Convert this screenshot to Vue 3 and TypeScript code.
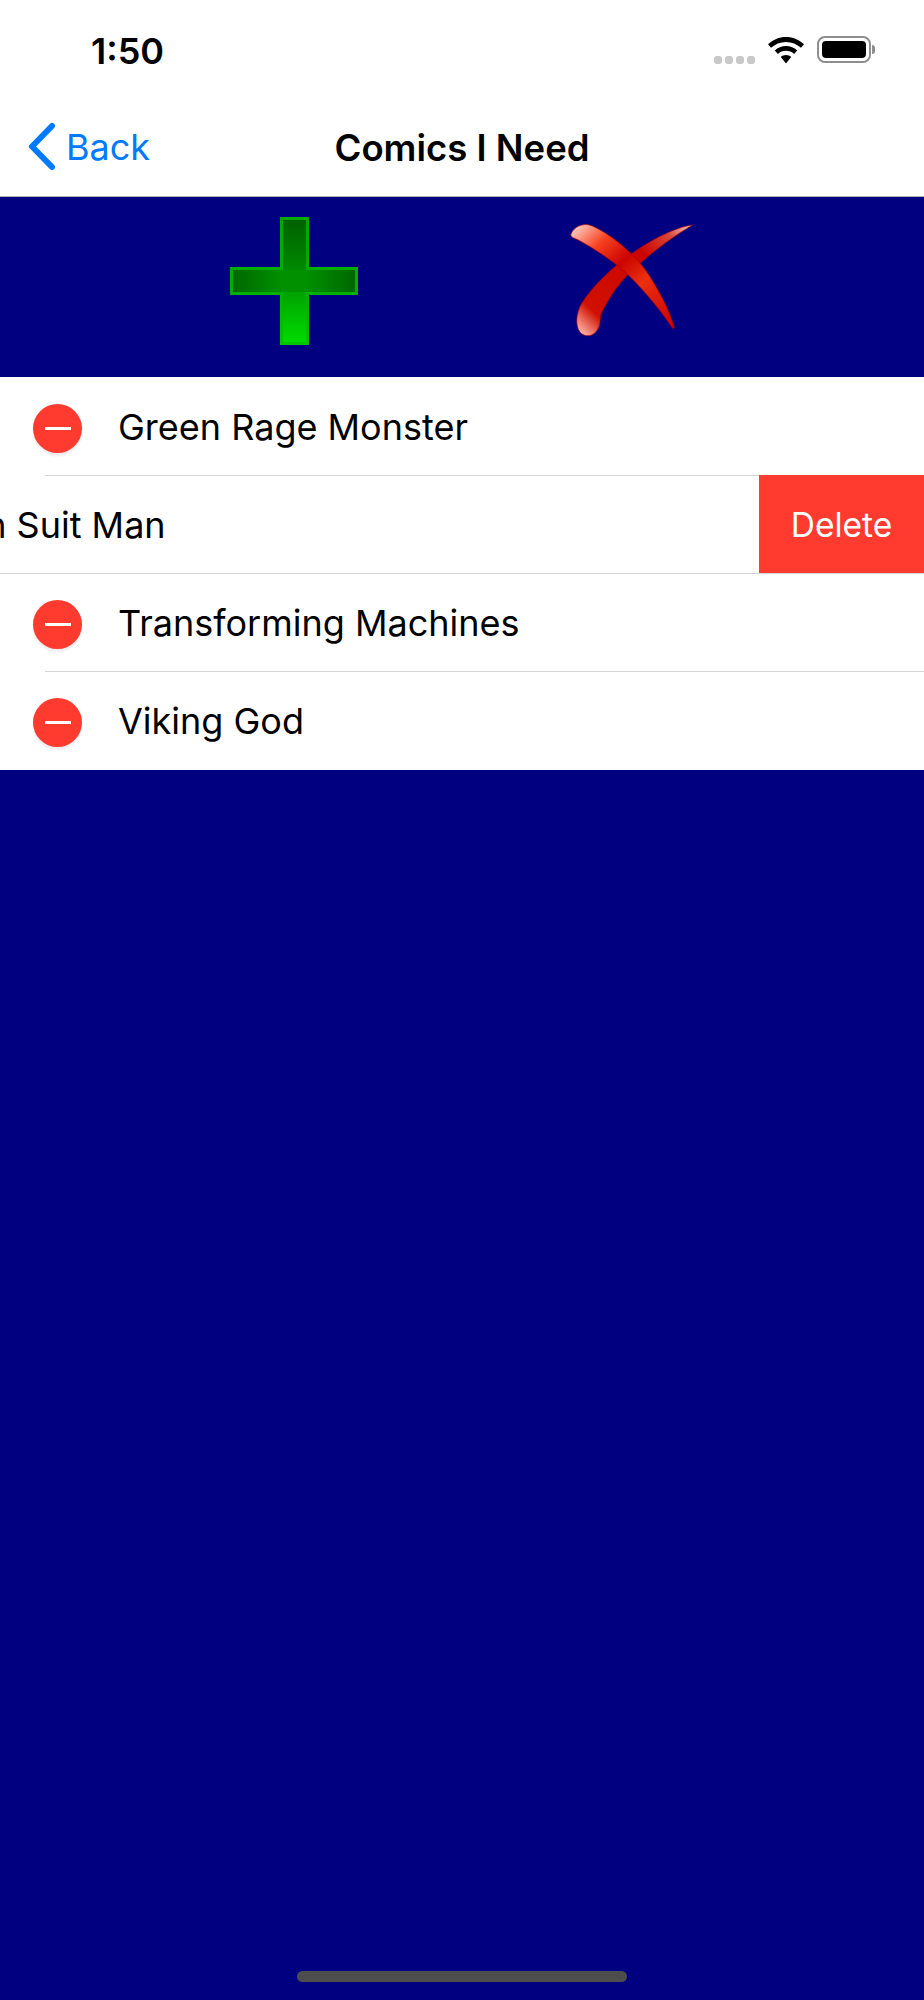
<script setup lang="ts">
interface Comic { name: string; swiped?: boolean }
const comics: Comic[] = [
  { name: 'Green Rage Monster' },
  { name: 'Iron Suit Man', swiped: true },
  { name: 'Transforming Machines' },
  { name: 'Viking God' },
]
</script>

<template>
  <div class="page">
    <header class="status">
      <span class="time">1:50</span>
      <div class="indicators">
        <div class="dots"><i></i><i></i><i></i><i></i></div>
        <svg class="wifi" width="36" height="27" viewBox="0 0 36 27">
          <path d="M18 0C11 0 5 2.700 0 7.300L3 10.800C7 7.100 12.200 4.900 18 4.900C23.800 4.900 29 7.100 33 10.800L36 7.300C31 2.700 25 0 18 0Z" fill="#000"/>
          <path d="M18 9C13.700 9 9.800 10.700 6.800 13.400L9.900 16.900C12 15 14.900 13.800 18 13.800C21.100 13.800 24 15 26.100 16.900L29.200 13.400C26.200 10.700 22.300 9 18 9Z" fill="#000"/>
          <path d="M18 18C16 18 14.200 18.700 12.800 19.900L18 26.500L23.200 19.900C21.800 18.700 20 18 18 18Z" fill="#000"/>
        </svg>
        <div class="battery"><div class="level"></div></div>
        <div class="nub"></div>
      </div>
    </header>

    <nav class="navbar">
      <div class="back">
        <svg width="30" height="50" viewBox="0 0 30 50">
          <path d="M25 4L5 24.500L25 45" fill="none" stroke="#007aff" stroke-width="6" stroke-linecap="round" stroke-linejoin="round"/>
        </svg>
        <span>Back</span>
      </div>
      <h1 class="title">Comics I Need</h1>
    </nav>

    <section class="toolbar">
      <svg class="plus" width="132" height="135" viewBox="0 0 132 135">
        <defs>
          <linearGradient id="plusV" x1="0" y1="0" x2="0" y2="1">
            <stop offset="0" stop-color="#006000"/>
            <stop offset="0.42" stop-color="#008a00"/>
            <stop offset="1" stop-color="#00dc00"/>
          </linearGradient>
          <linearGradient id="plusH" x1="0" y1="0" x2="1" y2="0">
            <stop offset="0" stop-color="#006800"/>
            <stop offset="0.4" stop-color="#009000"/>
            <stop offset="0.6" stop-color="#009000"/>
            <stop offset="1" stop-color="#006800"/>
          </linearGradient>
          <linearGradient id="plusEdge" x1="0" y1="0" x2="0" y2="1">
            <stop offset="0" stop-color="#00a800"/>
            <stop offset="0.6" stop-color="#00b000"/>
            <stop offset="1" stop-color="#00c400"/>
          </linearGradient>
        </defs>
        <path d="M52.500 4.500H78.500V54.500H127.500V79.500H78.500V129.500H52.500V79.500H2.500V54.500H52.500Z" fill="url(#plusV)"/>
        <rect x="4" y="56" width="122" height="22" fill="url(#plusH)"/>
        <path d="M52.500 4.500H78.500V54.500H127.500V79.500H78.500V129.500H52.500V79.500H2.500V54.500H52.500Z" fill="none" stroke="url(#plusEdge)" stroke-width="3"/>
      </svg>
      <svg class="cross" width="150" height="150" viewBox="0 0 450 450">
        <defs>
          <linearGradient id="xA" gradientUnits="userSpaceOnUse" x1="70" y1="60" x2="370" y2="370">
            <stop offset="0" stop-color="#ffd8d0"/>
            <stop offset="0.22" stop-color="#f6401f"/>
            <stop offset="0.42" stop-color="#cc0400"/>
            <stop offset="0.62" stop-color="#ea3010"/>
            <stop offset="1" stop-color="#cc0000"/>
          </linearGradient>
          <linearGradient id="xB" gradientUnits="userSpaceOnUse" x1="100" y1="395" x2="428" y2="60">
            <stop offset="0" stop-color="#ffb8b0"/>
            <stop offset="0.16" stop-color="#d01000"/>
            <stop offset="0.65" stop-color="#cc0400"/>
            <stop offset="0.85" stop-color="#d84838"/>
            <stop offset="1" stop-color="#ffd0d0"/>
          </linearGradient>
        </defs>
        <path d="M428 60C380 65 300 105 240 150C190 185 130 240 95 295C78 325 75 360 90 382C105 398 130 395 142 375C152 360 150 345 152 330C175 280 210 225 270 175C320 130 385 85 428 60Z" fill="url(#xB)" stroke="#a80000" stroke-width="2"/>
        <path d="M62 90C70 65 100 52 125 62C180 85 260 150 300 215C335 270 362 325 373 368C372 372 368 370 365 366C335 320 290 265 240 215C200 175 140 135 85 105C72 100 64 97 62 90Z" fill="url(#xA)" stroke="#a80000" stroke-width="2"/>
      </svg>
    </section>

    <ul class="list">
      <li v-for="comic in comics" :key="comic.name" class="row" :class="{ swiped: comic.swiped }">
        <div v-if="!comic.swiped" class="minus"><span></span></div>
        <span class="name">{{ comic.name }}</span>
        <div v-if="comic.swiped" class="delete">Delete</div>
      </li>
    </ul>

    <div class="home"></div>
  </div>
</template>

<style>
html, body { margin: 0; background: #000080; }
</style>

<style scoped>
.page {
  width: 924px;
  height: 2000px;
  display: flex;
  flex-direction: column;
  background: #000080;
  font-family: Inter, "Liberation Sans", sans-serif;
  color: #000;
  overflow: hidden;
}
.status {
  height: 88px;
  background: #fff;
  display: flex;
  justify-content: space-between;
  align-items: flex-start;
  padding: 0 49px 0 91px;
}
.time {
  font-size: 36px;
  font-weight: 600;
  line-height: 40px;
  margin-top: 31px;
}
.indicators {
  display: flex;
  align-items: flex-start;
  margin-top: 36px;
}
.dots {
  display: flex;
  gap: 3px;
  margin: 20px 13px 0 0;
}
.dots i {
  width: 8px;
  height: 8px;
  border-radius: 3px;
  background: #c8c8c8;
}
.wifi { margin-right: 13px; margin-top: 1px; }
.battery {
  width: 54px;
  height: 27px;
  box-sizing: border-box;
  border: 2px solid #8e8e8e;
  border-radius: 8px;
  padding: 3px;
}
.level {
  height: 100%;
  background: #000;
  border-radius: 4px;
}
.nub {
  width: 3px;
  height: 9px;
  margin: 9px 0 0 1px;
  background: #8e8e8e;
  border-radius: 0 4px 4px 0;
}
.navbar {
  height: 109px;
  box-sizing: border-box;
  background: #fff;
  border-bottom: 1px solid #b2b2b2;
  position: relative;
  display: flex;
  align-items: center;
  justify-content: center;
  padding-top: 11px;
}
.back {
  position: absolute;
  left: 27px;
  top: 34px;
  display: flex;
  align-items: center;
  gap: 9px;
  color: #007aff;
  font-size: 36px;
  line-height: 50px;
}
.title {
  margin: 0;
  font-size: 36.5px;
  font-weight: 600;
  line-height: 50px;
}
.toolbar {
  height: 180px;
  position: relative;
  background: #000080;
}
.plus { position: absolute; left: 229px; top: 17px; }
.cross { position: absolute; left: 550px; top: 8px; }
.list {
  list-style: none;
  margin: 0;
  padding: 0 0 1px;
  background: #fff;
}
.row {
  height: 98px;
  box-sizing: border-box;
  padding-top: 2px;
  position: relative;
  display: flex;
  align-items: center;
  overflow: hidden;
  background: #fff;
}
.row + .row::before {
  content: "";
  position: absolute;
  left: 45px;
  right: 0;
  top: 0;
  height: 1px;
  background: #d4d4d4;
}
.row.swiped + .row::before { left: 0; }
.minus {
  width: 49px;
  height: 49px;
  margin-left: 33px;
  margin-top: 2px;
  flex: none;
  border-radius: 50%;
  background: #ff3b30;
  box-shadow: 0 3px 2px rgba(0, 0, 0, 0.07);
  display: flex;
  align-items: center;
  justify-content: center;
}
.minus span {
  width: 26px;
  height: 3px;
  background: #fff;
}
.name {
  font-size: 36px;
  line-height: 50px;
  margin-left: 36px;
  margin-top: -1px;
  white-space: nowrap;
}
.swiped .name {
  margin-left: -59px;
}
.delete {
  position: absolute;
  right: 0;
  top: 0;
  bottom: 0;
  width: 165px;
  padding-top: 1px;
  box-sizing: border-box;
  background: #ff3b30;
  color: #fff;
  font-size: 33.500px;
  display: flex;
  align-items: center;
  justify-content: center;
  z-index: 1;
}
.home {
  width: 330px;
  height: 11px;
  margin: auto auto 18px;
  border-radius: 6px;
  background: #4d4d4d;
}
</style>
